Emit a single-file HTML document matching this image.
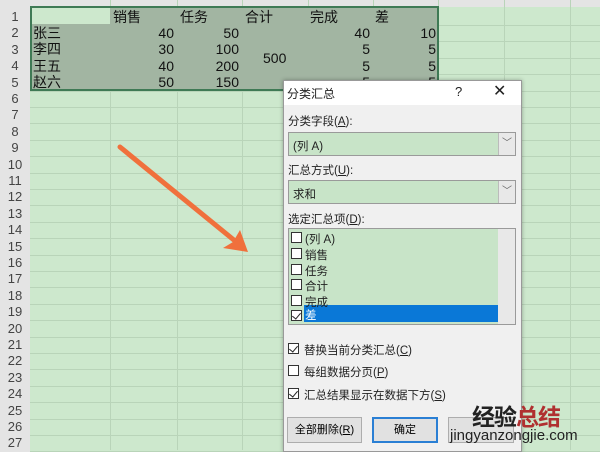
<!DOCTYPE html>
<html><head><meta charset="utf-8"><style>
*{margin:0;padding:0;box-sizing:border-box}
body{width:600px;height:450px;overflow:hidden;background:#cde8cd;font-family:"Liberation Sans","Noto Sans CJK SC",sans-serif;position:relative}
.a{position:absolute}
.vl{position:absolute;top:0;width:1px;height:450px;background:#b9d4b9}
.hl{position:absolute;left:0;width:600px;height:1px;background:#b9d4b9}
.rh{position:absolute;left:0;width:30px;text-align:center;font-size:13px;color:#444;background:#e4e4e4}
.t{position:absolute;font-size:14px;color:#111;line-height:16px}
.r{text-align:right}
.dl{font-size:11.5px;color:#222;position:absolute}
.cb{position:absolute;width:11px;height:11px;border:1px solid #333;background:#fff}
.chk::after{content:"";position:absolute;left:2px;top:0px;width:4px;height:7px;border:solid #222;border-width:0 1.5px 1.5px 0;transform:rotate(40deg)}
.combo{position:absolute;left:288px;width:228px;height:24px;background:#c8e4c8;border:1px solid #9a9a9a}
.btn{position:absolute;height:26px;background:#e1e1e1;border:1px solid #adadad;font-size:11px;text-align:center;line-height:24px}
</style></head><body>
<div class="a" style="left:0;top:0;width:600px;height:7px;background:#e4e4e4"></div>
<div class="a" style="left:0;top:0;width:30px;height:450px;background:#e4e4e4"></div>
<div class="vl" style="left:110px"></div><div class="vl" style="left:177px"></div><div class="vl" style="left:242px"></div><div class="vl" style="left:308px"></div><div class="vl" style="left:373px"></div><div class="vl" style="left:438px"></div><div class="vl" style="left:504px"></div><div class="vl" style="left:570px"></div>
<div id="rows"></div>
<script>
var s='';for(var n=1;n<=27;n++){var t=9+(n-1)*16.4;s+='<div class="hl" style="top:'+(t+16)+'px"></div><div class="rh" style="top:'+t+'px;height:16.4px;line-height:16px">'+n+'</div>';}
document.getElementById('rows').innerHTML=s;
</script>
<div class="a" style="left:30px;top:6px;width:409px;height:85px;background:#a2b5a2;border:2px solid #3f7a55"></div>
<div class="a" style="left:32px;top:8px;width:78px;height:16px;background:#cde8cd"></div>
<div class="t" style="left:113px;top:9px">销售</div><div class="t" style="left:180px;top:9px">任务</div><div class="t" style="left:245px;top:9px">合计</div><div class="t" style="left:310px;top:9px">完成</div><div class="t" style="left:375px;top:9px">差</div>
<div class="t" style="left:33px;top:25px">张三</div><div class="t" style="left:33px;top:41px">李四</div><div class="t" style="left:33px;top:58px">王五</div><div class="t" style="left:33px;top:74px">赵六</div>
<div class="t r" style="left:110px;width:64px;top:25px">40</div><div class="t r" style="left:110px;width:64px;top:41px">30</div><div class="t r" style="left:110px;width:64px;top:58px">40</div><div class="t r" style="left:110px;width:64px;top:74px">50</div>
<div class="t r" style="left:177px;width:62px;top:25px">50</div><div class="t r" style="left:177px;width:62px;top:41px">100</div><div class="t r" style="left:177px;width:62px;top:58px">200</div><div class="t r" style="left:177px;width:62px;top:74px">150</div>
<div class="t" style="left:263px;top:50px">500</div>
<div class="t r" style="left:308px;width:62px;top:25px">40</div><div class="t r" style="left:308px;width:62px;top:41px">5</div><div class="t r" style="left:308px;width:62px;top:58px">5</div><div class="t r" style="left:308px;width:62px;top:74px">5</div>
<div class="t r" style="left:373px;width:63px;top:25px">10</div><div class="t r" style="left:373px;width:63px;top:41px">5</div><div class="t r" style="left:373px;width:63px;top:58px">5</div><div class="t r" style="left:373px;width:63px;top:74px">5</div>
<svg class="a" style="left:0;top:0" width="600" height="450"><line x1="120" y1="147" x2="240" y2="245" stroke="#f0703c" stroke-width="5" stroke-linecap="round"/><polygon points="248,252 223,248 233,242 240,230" fill="#f0703c"/></svg>
<div class="a" style="left:283px;top:80px;width:239px;height:372px;background:#f0f0f0;border:1px solid #999;box-shadow:0 0 4px rgba(0,0,0,.3)"></div>
<div class="a" style="left:284px;top:81px;width:237px;height:24px;background:#fff"></div>
<div class="dl" style="left:287px;top:85px;font-size:12px">分类汇总</div>
<div class="dl" style="left:455px;top:84px;font-size:13px">?</div>
<div class="dl" style="left:493px;top:81px;font-size:16px">✕</div>
<div class="dl" style="left:288px;top:113px">分类字段(<u>A</u>):</div>
<div class="combo" style="top:132px"><span class="dl" style="left:4px;top:5px">(列 A)</span><span class="a" style="right:0;top:0;width:17px;height:22px;background:#e8e8e8;border-left:1px solid #bbb;font-size:10px;text-align:center;line-height:22px;color:#666">﹀</span></div>
<div class="dl" style="left:288px;top:162px">汇总方式(<u>U</u>):</div>
<div class="combo" style="top:180px"><span class="dl" style="left:4px;top:5px">求和</span><span class="a" style="right:0;top:0;width:17px;height:22px;background:#e8e8e8;border-left:1px solid #bbb;font-size:10px;text-align:center;line-height:22px;color:#666">﹀</span></div>
<div class="dl" style="left:288px;top:211px">选定汇总项(<u>D</u>):</div>
<div class="a" style="left:288px;top:228px;width:228px;height:97px;background:#c8e4c8;border:1px solid #9a9a9a"></div>
<div class="a" style="left:498px;top:229px;width:17px;height:95px;background:#e8e8e8"></div>
<div class="a" style="left:304px;top:305px;width:194px;height:17px;background:#0a78d7"></div>
<div class="cb" style="left:291px;top:232px"></div><div class="dl" style="left:305px;top:231px">(列 A)</div>
<div class="cb" style="left:291px;top:248px"></div><div class="dl" style="left:305px;top:247px">销售</div>
<div class="cb" style="left:291px;top:264px"></div><div class="dl" style="left:305px;top:263px">任务</div>
<div class="cb" style="left:291px;top:279px"></div><div class="dl" style="left:305px;top:278px">合计</div>
<div class="cb" style="left:291px;top:295px"></div><div class="dl" style="left:305px;top:294px">完成</div>
<div class="cb chk" style="left:291px;top:310px"></div><div class="dl" style="left:305px;top:307px;color:#fff">差</div>
<div class="cb chk" style="left:288px;top:343px"></div><div class="dl" style="left:304px;top:342px">替换当前分类汇总(<u>C</u>)</div>
<div class="cb" style="left:288px;top:365px"></div><div class="dl" style="left:304px;top:364px">每组数据分页(<u>P</u>)</div>
<div class="cb chk" style="left:288px;top:388px"></div><div class="dl" style="left:304px;top:387px">汇总结果显示在数据下方(<u>S</u>)</div>
<div class="btn" style="left:287px;top:417px;width:75px">全部删除(<u>R</u>)</div>
<div class="btn" style="left:372px;top:417px;width:66px;border:2px solid #2a7fd4;line-height:22px">确定</div>
<div class="btn" style="left:448px;top:417px;width:66px"></div>
<div class="a" style="left:472px;top:398px;font-size:23px;font-weight:bold;color:#222;letter-spacing:-1px">经验<span style="color:#b03030">总结</span></div>
<div class="a" style="left:450px;top:427px;font-size:15px;color:#222">jingyanzongjie.com</div>
</body></html>
